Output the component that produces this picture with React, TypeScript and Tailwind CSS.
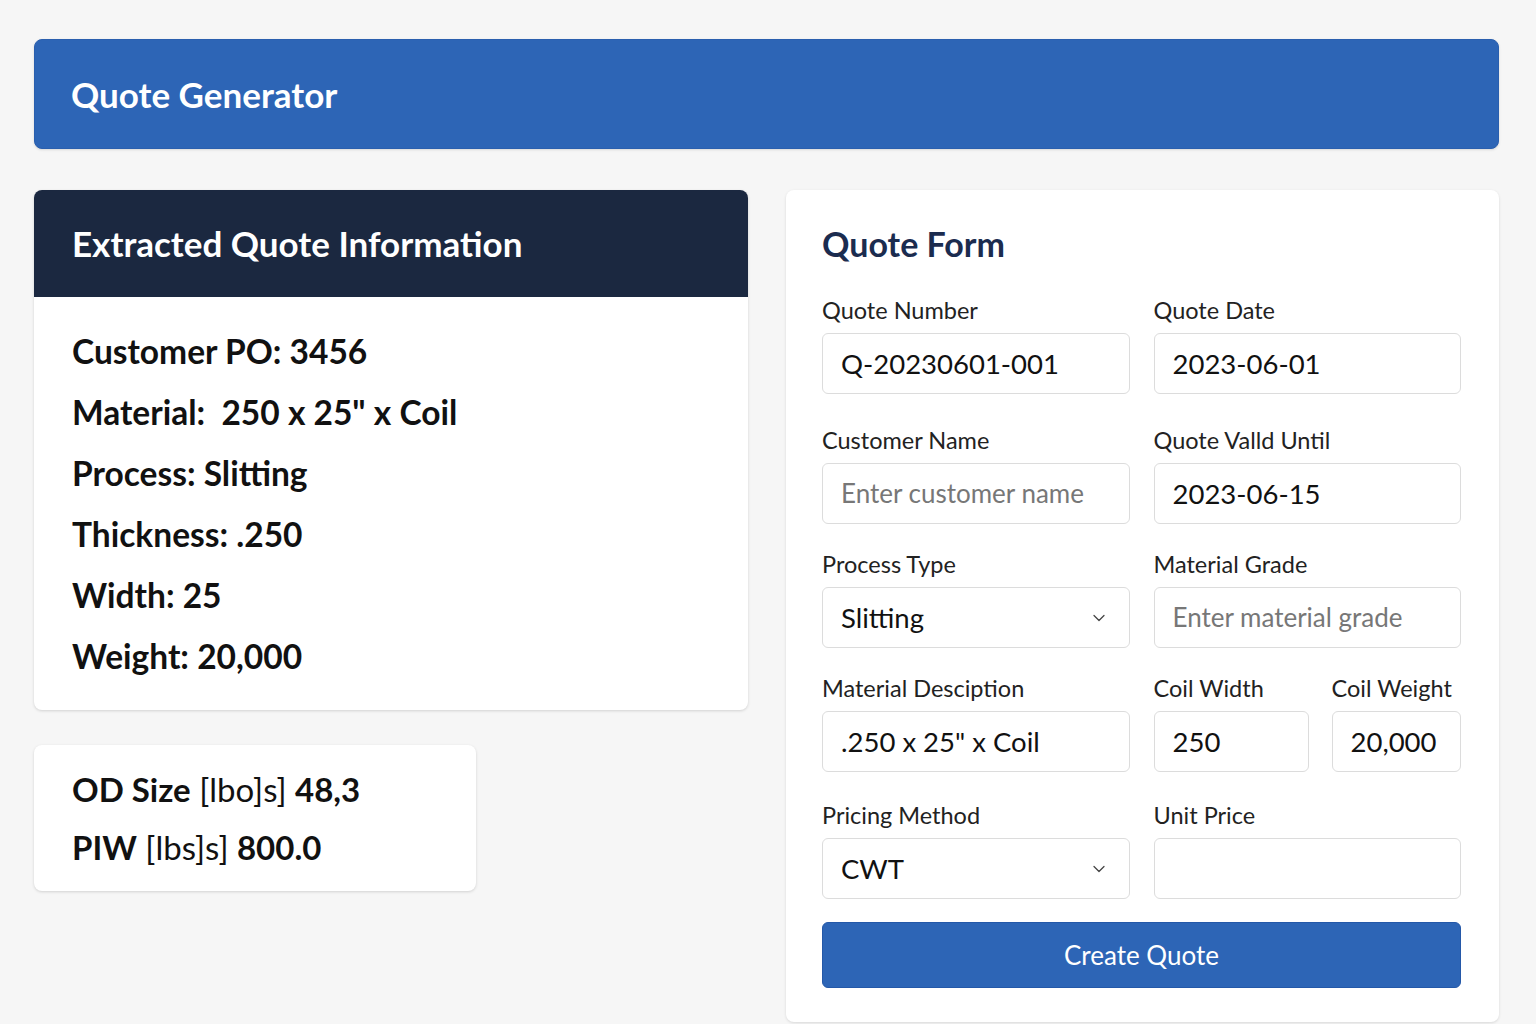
import { ChevronDown } from 'lucide-react'

const font = { fontFamily: 'Lato, "Open Sans", sans-serif' }

function Field({ label, children, className = '' }: { label: string; children: React.ReactNode; className?: string }) {
  return (
    <div className={className}>
      <label className="block text-[23.5px] leading-[28px] text-[#222] mb-[9px]">{label}</label>
      {children}
    </div>
  )
}

function TextBox({ value, placeholder }: { value?: string; placeholder?: string }) {
  return (
    <div className="h-[61px] px-[18px] flex items-center border border-[#dcdcdc] rounded-md bg-white">
      {value ? (
        <span className="text-[27.5px] text-[#111]">{value}</span>
      ) : (
        <span className="text-[26px] text-[#777]">{placeholder}</span>
      )}
    </div>
  )
}

function SelectBox({ value }: { value: string }) {
  return (
    <div className="h-[61px] pl-[18px] pr-[20px] flex items-center justify-between border border-[#dcdcdc] rounded-md bg-white">
      <span className="text-[27.5px] text-[#111]">{value}</span>
      <ChevronDown className="w-5 h-5 text-[#444]" strokeWidth={1.5} />
    </div>
  )
}

export default function App() {
  return (
    <div style={font} className="min-h-screen bg-[#f6f6f6] pl-[34px] pr-[37px] pt-[39px] pb-[2px]">
      <header className="h-[110px] bg-[#2d65b6] rounded-lg border border-[#2a5fae] shadow-sm flex items-center px-[36px]">
        <h1 className="text-white text-[35px] font-bold">Quote Generator</h1>
      </header>

      <div className="flex gap-[38px] mt-[41px] items-start">
        <div className="w-[714px] flex flex-col gap-[35px]">
          <section className="bg-white rounded-lg shadow-[0_1px_3px_rgba(0,0,0,0.15)] overflow-hidden">
            <div className="h-[107px] bg-[#1b2840] flex items-center px-[38px]">
              <h2 className="text-white text-[35px] font-bold">Extracted Quote Information</h2>
            </div>
            <div className="px-[38px] pt-[24px] pb-[23px] text-[33.5px] font-bold text-[#111] leading-[61px]">
              <p>Customer PO: 3456</p>
              <p>Material:&nbsp; 250 x 25" x Coil</p>
              <p>Process: Slitting</p>
              <p>Thickness: .250</p>
              <p>Width: 25</p>
              <p>Weight: 20,000</p>
            </div>
          </section>

          <section className="w-[442px] bg-white rounded-lg shadow-[0_1px_3px_rgba(0,0,0,0.15)] px-[38px] pt-[15px] pb-[15px] text-[33px] text-[#111] leading-[58px]">
            <p>
              <span className="font-bold">OD Size</span> <span className="font-normal">[lbo]s]</span> <span className="font-bold">48,3</span>
            </p>
            <p>
              <span className="font-bold">PIW</span> <span className="font-normal">[lbs]s]</span> <span className="font-bold">800.0</span>
            </p>
          </section>
        </div>

        <section className="flex-1 bg-white rounded-lg shadow-[0_1px_3px_rgba(0,0,0,0.12)] pl-[36px] pr-[38px] pt-[24px] pb-[34px]">
          <h2 className="text-[34px] font-bold text-[#1b2c4f] leading-[60px] mb-[22px]">Quote Form</h2>

          <div className="grid grid-cols-2 gap-x-[24px] gap-y-[26px]">
            <Field label="Quote Number">
              <TextBox value="Q-20230601-001" />
            </Field>
            <Field label="Quote Date">
              <TextBox value="2023-06-01" />
            </Field>
            <Field label="Customer Name" className="mt-[6px]">
              <TextBox placeholder="Enter customer name" />
            </Field>
            <Field label="Quote Valld Until" className="mt-[6px]">
              <TextBox value="2023-06-15" />
            </Field>
            <Field label="Process Type">
              <SelectBox value="Slitting" />
            </Field>
            <Field label="Material Grade">
              <TextBox placeholder="Enter material grade" />
            </Field>
            <Field label="Material Desciption">
              <TextBox value={'.250 x 25" x Coil'} />
            </Field>
            <div className="flex gap-[23px]">
              <Field label="Coil Width" className="w-[155px]">
                <TextBox value="250" />
              </Field>
              <Field label="Coil Weight" className="flex-1">
                <TextBox value="20,000" />
              </Field>
            </div>
            <Field label="Pricing Method" className="mt-[3px]">
              <SelectBox value="CWT" />
            </Field>
            <Field label="Unit Price" className="mt-[3px]">
              <TextBox />
            </Field>
          </div>

          <button className="mt-[23px] w-full h-[66px] bg-[#2d65b6] border border-[#2458a8] rounded-md text-white text-[26px]">
            Create Quote
          </button>
        </section>
      </div>
    </div>
  )
}
